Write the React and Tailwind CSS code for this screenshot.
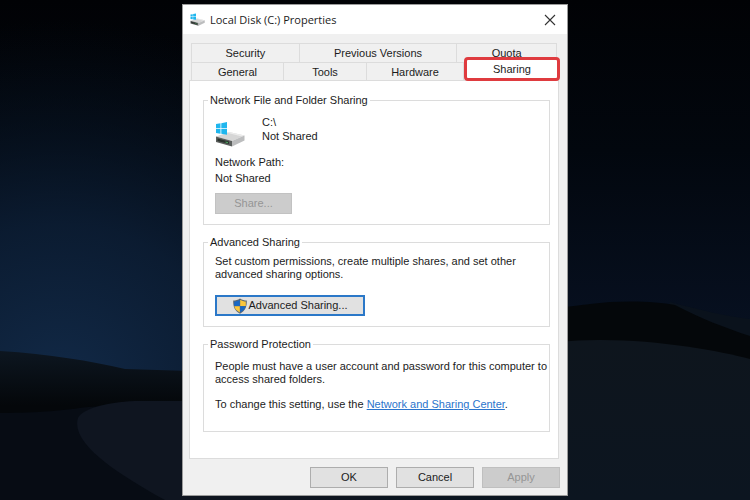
import React from 'react';

const DriveIcon = ({ className }) => (
  <svg className={className} viewBox="0 0 30 26" aria-hidden="true">
    <path d="M1 15.500L14 11L29.500 14.500L17 20Z" fill="#d6d6d6" />
    <path d="M12 11.700L14 11L29.500 14.500L27 15.600Z" fill="#ececec" />
    <path d="M1 15.500L17 20V25.500L1 21Z" fill="#5b5f5d" />
    <path d="M17 20L29.500 14.500V19.500L17 25.500Z" fill="#bcbdbe" />
    <path d="M2.500 17.500L14 20.500V23L2.500 20Z" fill="#2c332e" />
    <path d="M10.500 20.500L13 21.200V22.300L10.500 21.600Z" fill="#4fae62" />
    <path d="M1 3L5.500 2.300V7.200H1ZM6.300 2.200L12 1V7.200H6.300ZM1 8H5.500V12.700L1 12ZM6.300 8H12V13.700L6.300 12.800Z" fill="#1fb6ee" />
  </svg>
);

const ShieldIcon = () => (
  <svg className="h-4 w-4 shrink-0" viewBox="0 0 16 16" aria-hidden="true">
    <path d="M8 0.500C6 2 3.500 2.500 1.200 2.500C1 8 2.500 13 8 15.700C13.500 13 15 8 14.800 2.500C12.500 2.500 10 2 8 0.500Z" fill="#5d6770" />
    <path d="M7.800 1.800C6 3 4 3.500 2.200 3.600V8H7.800Z" fill="#1a68c4" />
    <path d="M8.200 1.800C10 3 12 3.500 13.800 3.600V8H8.200Z" fill="#fcc73d" />
    <path d="M2.300 8.300H7.800V14.400C4.500 12.800 2.800 10.800 2.300 8.300Z" fill="#fcc73d" />
    <path d="M13.700 8.300H8.200V14.400C11.500 12.800 13.200 10.800 13.700 8.300Z" fill="#1a68c4" />
  </svg>
);

const Wallpaper = () => (
  <svg className="absolute inset-0 h-full w-full" viewBox="0 0 750 500" preserveAspectRatio="none" aria-hidden="true">
    <defs>
      <linearGradient id="sky" x1="0" y1="0" x2="0" y2="1">
        <stop offset="0" stopColor="#010205" />
        <stop offset="0.300" stopColor="#02070e" />
        <stop offset="0.650" stopColor="#071020" />
      </linearGradient>
      <radialGradient id="glow" gradientUnits="userSpaceOnUse" cx="0" cy="0" r="1" gradientTransform="translate(60 390) scale(380 370)">
        <stop offset="0" stopColor="#122a48" />
        <stop offset="0.450" stopColor="#0c1e35" stopOpacity="0.850" />
        <stop offset="1" stopColor="#071220" stopOpacity="0" />
      </radialGradient>
      <linearGradient id="ridge" x1="0" y1="0" x2="0" y2="1">
        <stop offset="0" stopColor="#0d1620" />
        <stop offset="0.850" stopColor="#04070a" />
      </linearGradient>
      <linearGradient id="dune" x1="0" y1="0" x2="0" y2="1">
        <stop offset="0" stopColor="#0e151d" />
        <stop offset="1" stopColor="#0c1520" />
      </linearGradient>
    </defs>
    <rect width="750" height="500" fill="url(#sky)" />
    <rect width="750" height="500" fill="url(#glow)" />
    <path d="M0 351C50 354 90 361 125 369L190 371H400V415H0Z" fill="url(#ridge)" />
    <path d="M0 413C40 413 65 410 88 407L200 400H400V500H0Z" fill="#070c14" />
    <path d="M78 418C82 408 112 401 140 401H400V500H165C120 475 70 444 78 418Z" fill="#0f1520" />
    <path d="M670 302C700 310 725 316 750 319V362H650Z" fill="#0a121c" />
    <path d="M380 340C480 315 560 308 590 304C620 300 655 301 675 305C700 318 725 328 750 336V370H380Z" fill="#04070a" />
    <path d="M380 390C460 355 540 340 600 340C660 340 720 351 750 359V500H380Z" fill="url(#dune)" />
  </svg>
);

const Group = ({ title, className, children }) => (
  <fieldset className={`border border-[#dcdcdc] pl-[11px] ${className}`}>
    <legend className="-ml-[7px] px-0.5 leading-[14px]">{title}</legend>
    {children}
  </fieldset>
);

const tabClass = 'h-full border-r border-[#dcdcdc] text-center last:border-r-0';
const buttonClass = 'h-[21px] w-[78px] border';

const App = () => {
  return (
    <main className="relative flex min-h-screen items-center justify-center bg-[#03070d] font-['Liberation_Sans',Arial,sans-serif] text-[11px] leading-[13px] text-[#1c1c1c]">
      <Wallpaper />

      <section role="dialog" aria-labelledby="title" className="relative w-full max-w-[386px] border border-[#9b9b9b] bg-[#f0f0f0]">
        {/* Title bar */}
        <header className="flex h-[29px] items-center bg-white pl-[7px] pr-2.5">
          <DriveIcon className="h-[13px] w-[15px]" />
          <h1 id="title" className="ml-[5px] flex-1 font-['Open_Sans','Noto_Sans',sans-serif] text-[11px] leading-4">Local Disk (C:) Properties</h1>
          <button aria-label="Close" className="p-px">
            <svg className="h-3 w-3" viewBox="0 0 12 12" fill="none" stroke="#333" strokeWidth="1.100">
              <path d="M1 1L11 11M11 1L1 11" />
            </svg>
          </button>
        </header>

        <div className="pb-[7px] pl-1.5 pr-2 pt-[9px]">
          {/* Tabs */}
          <div role="tablist">
            <div className="mx-0.5 grid h-[19px] grid-cols-[108fr_158fr_99fr] border border-b-0 border-[#dcdcdc]">
              <button role="tab" className={tabClass}>Security</button>
              <button role="tab" className={tabClass}>Previous Versions</button>
              <button role="tab" className={tabClass}>Quota</button>
            </div>
            <div className="-mr-px ml-0.5 grid h-[18px] grid-cols-[92fr_83fr_97fr_96fr] border-l border-t border-[#dcdcdc]">
              <button role="tab" className={tabClass}>General</button>
              <button role="tab" className={tabClass}>Tools</button>
              <button role="tab" className={tabClass}>Hardware</button>
              <button role="tab" aria-selected="true" className="relative -mt-1.5 h-6 rounded-[4px] border-[3px] border-[#df3b3f] bg-white">Sharing</button>
            </div>
          </div>

          {/* Sharing panel */}
          <div role="tabpanel" className="border border-[#dcdcdc] bg-white pb-[26px] pl-[13px] pr-2 pt-3">
            <Group title="Network File and Folder Sharing" className="pb-2.5 pt-2">
              <div className="flex">
                <DriveIcon className="mt-1.5 h-[26px] w-[30px]" />
                <div className="ml-[17px] leading-[14px]">
                  <p>C:\</p>
                  <p>Not Shared</p>
                </div>
              </div>
              <div className="mt-[7px] leading-4">
                <p>Network Path:</p>
                <p>Not Shared</p>
              </div>
              <button disabled className="mt-[7px] h-[21px] w-[77px] border border-[#c2c2c2] bg-[#cccccc] text-[#959595]">Share...</button>
            </Group>

            <Group title="Advanced Sharing" className="mt-2.5 pb-2.5 pt-1.5">
              <p className="whitespace-nowrap">
                Set custom permissions, create multiple shares, and set other<br />
                advanced sharing options.
              </p>
              <button className="mt-3.5 flex h-[21px] w-[150px] items-center justify-center border-2 border-[#2b78c8] bg-[#e1e1e1]">
                <ShieldIcon />
                <span>Advanced Sharing...</span>
              </button>
            </Group>

            <Group title="Password Protection" className="mt-2.5 pb-5 pt-[9px]">
              <p className="whitespace-nowrap">
                People must have a user account and password for this computer to<br />
                access shared folders.
              </p>
              <p className="mt-3">
                To change this setting, use the <a href="#network" className="text-[#2b74cc] underline">Network and Sharing Center</a>.
              </p>
            </Group>
          </div>

          {/* Footer buttons */}
          <footer className="-mr-px mt-2 flex justify-end gap-2">
            <button className={`${buttonClass} border-[#adadad] bg-[#e1e1e1]`}>OK</button>
            <button className={`${buttonClass} border-[#adadad] bg-[#e1e1e1]`}>Cancel</button>
            <button disabled className={`${buttonClass} border-[#bfbfbf] bg-[#cccccc] text-[#959595]`}>Apply</button>
          </footer>
        </div>
      </section>
    </main>
  );
};

export default App;
